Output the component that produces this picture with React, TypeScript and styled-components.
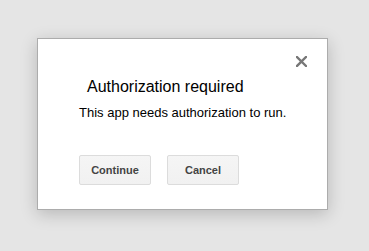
import styled, { createGlobalStyle } from 'styled-components';

const GlobalStyle = createGlobalStyle`
  html, body {
    margin: 0;
    padding: 0;
    background: #e5e5e5;
    font-family: Arial, "Liberation Sans", sans-serif;
  }
`;

export default function App() {
  return (
    <>
      <GlobalStyle />
      <Page>
        <Dialog>
          <CloseButton aria-label="Close">
            <svg width="11" height="11" viewBox="0 0 11 11">
              <path
                d="M1 1 L10 10 M10 1 L1 10"
                stroke="#777"
                strokeWidth="2.4"
                strokeLinecap="square"
              />
            </svg>
          </CloseButton>
          <Title>Authorization required</Title>
          <Message>This app needs authorization to run.</Message>
          <Actions>
            <Button>Continue</Button>
            <Button>Cancel</Button>
          </Actions>
        </Dialog>
      </Page>
    </>
  );
}

const Page = styled.div`
  width: 369px;
  height: 251px;
  padding: 38px 0 0 37px;
  box-sizing: border-box;
`;

const Dialog = styled.div`
  position: relative;
  width: 291px;
  height: 172px;
  box-sizing: border-box;
  background: #fff;
  border: 1px solid #acacac;
  box-shadow: 0 4px 16px rgba(0, 0, 0, 0.2);
  padding: 38px 0 0 41px;
  display: flex;
  flex-direction: column;
`;

const CloseButton = styled.div`
  position: absolute;
  top: 17px;
  right: 20px;
  width: 11px;
  height: 11px;
  display: grid;
  place-items: center;
  cursor: pointer;
`;

const Title = styled.div`
  font-size: 16px;
  color: #000;
  padding-left: 8px;
  line-height: 20px;
`;

const Message = styled.div`
  margin-top: 8px;
  font-size: 13px;
  color: #000;
  line-height: 16px;
`;

const Actions = styled.div`
  display: flex;
  gap: 16px;
  margin-top: 34px;
`;

const Button = styled.button`
  width: 72px;
  height: 30px;
  box-sizing: border-box;
  border: 1px solid #dcdcdc;
  border-radius: 2px;
  background: linear-gradient(#f5f5f5, #f1f1f1);
  color: #444;
  font-family: Arial, "Liberation Sans", sans-serif;
  font-size: 11px;
  font-weight: bold;
  padding: 0;
  cursor: pointer;
`;
